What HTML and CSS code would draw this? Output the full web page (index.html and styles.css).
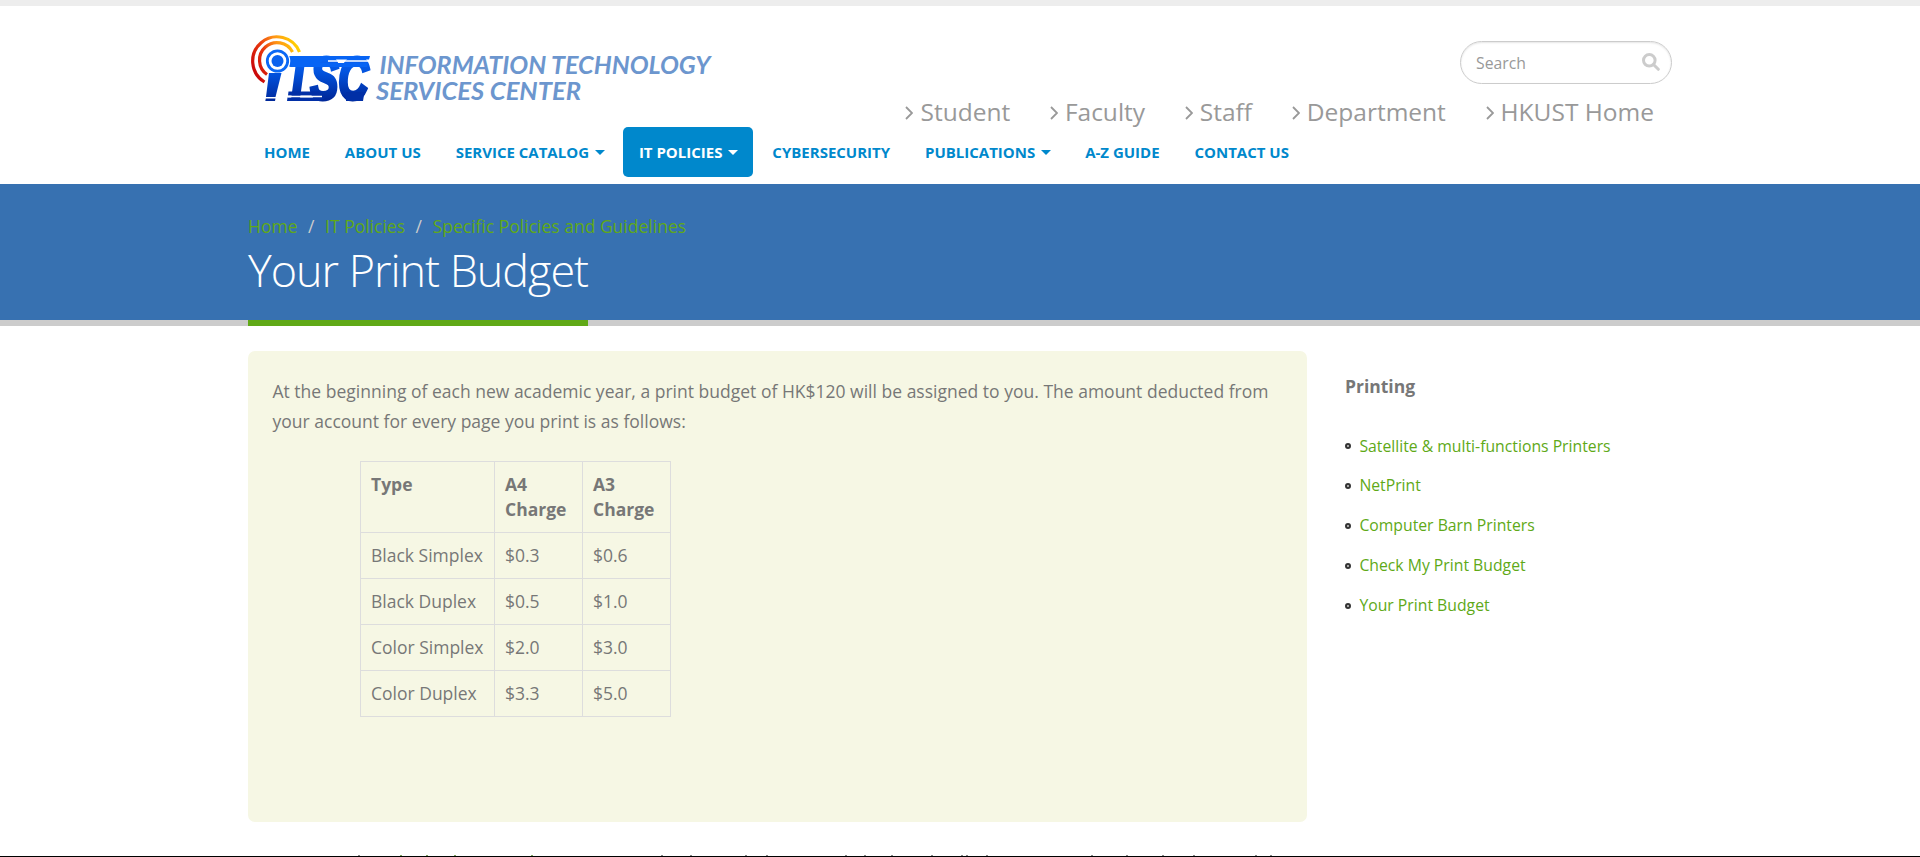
FILE: index.html
```
<!DOCTYPE html>
<html lang="en">
<head>
<meta charset="utf-8">
<title>Your Print Budget</title>
<link rel="stylesheet" href="styles.css">
</head>
<body>
<header class="header">
  <div class="container">
    <div class="masthead">
      <svg class="logo" viewBox="248 28 470 80" width="470" height="80" role="img" aria-label="ITSC">
        <defs>
          <linearGradient id="blue" gradientUnits="userSpaceOnUse" x1="0" y1="52" x2="0" y2="101"><stop offset="0" stop-color="#0a6cff"/><stop offset=".35" stop-color="#0257e6"/><stop offset="1" stop-color="#00289a"/></linearGradient>
          <linearGradient id="fire" gradientUnits="userSpaceOnUse" x1="254" y1="68" x2="298" y2="44"><stop offset="0" stop-color="#cb0a0a"/><stop offset=".35" stop-color="#e8380d"/><stop offset=".65" stop-color="#ff9416"/><stop offset="1" stop-color="#ffd400"/></linearGradient>
          <linearGradient id="glyph" gradientUnits="userSpaceOnUse" x1="0" y1="-43" x2="0" y2="0"><stop offset="0" stop-color="#0a68fa"/><stop offset=".4" stop-color="#0252dc"/><stop offset="1" stop-color="#00289a"/></linearGradient>
        </defs>
        <g fill="none" stroke="url(#fire)" stroke-width="3.200">
          <path d="M264.500 81A24.300 24.300 0 1 1 299.500 51"/>
          <path d="M267 73.500A17.500 17.500 0 1 1 292.500 51"/>
        </g>
        <text class="logo-mark" transform="translate(285 98) scale(.695 1)" fill="url(#glyph)" stroke="url(#glyph)" stroke-width="4">TSC</text>
        <circle cx="277.500" cy="60" r="12.800" fill="#fff"/>
        <path d="M269 72H281.500L275.500 96H266Z" fill="url(#blue)"/>
        <path d="M265.800 97.500H275.500L275 100H265.300Z" fill="#00289a"/>
        <circle cx="277.500" cy="60" r="10.200" fill="#fff" stroke="#0b68f5" stroke-width="2.800"/>
        <circle cx="277.500" cy="60" r="6" fill="#0b62ee"/>
        <path d="M292 55H370L369 58.500H326Q322 59 320 62H368L367 66H340L313 66H290Z" fill="#0764f4"/>
        <path d="M288.500 90.500H320L318 94.500H288ZM287.500 96.500H326L320 100H287ZM346 91H364.500L363 100H346Z" fill="#012fa6"/>
        <path d="M328 60H370M288 95.500H322" stroke="#fff" stroke-width="1.300"/>
        <g class="logo-name">
          <text x="379.500" y="73" textLength="331" lengthAdjust="spacingAndGlyphs">INFORMATION TECHNOLOGY</text>
          <text x="376" y="99" textLength="205" lengthAdjust="spacingAndGlyphs">SERVICES CENTER</text>
        </g>
      </svg>
      <div class="masthead-side">
        <form class="search">
          <input class="search-input" type="text" placeholder="Search" aria-label="Search">
          <svg class="search-icon" viewBox="0 0 18 18" width="18" height="18"><circle cx="7.300" cy="7.300" r="5.800"/><path d="M11.500 11.500L16.300 16.300"/></svg>
        </form>
        <nav class="audience">
          <a href="#"><svg class="chevron" viewBox="0 0 8 14"><path d="M1 1L7 7L1 13"/></svg>Student</a>
          <a href="#"><svg class="chevron" viewBox="0 0 8 14"><path d="M1 1L7 7L1 13"/></svg>Faculty</a>
          <a href="#"><svg class="chevron" viewBox="0 0 8 14"><path d="M1 1L7 7L1 13"/></svg>Staff</a>
          <a href="#"><svg class="chevron" viewBox="0 0 8 14"><path d="M1 1L7 7L1 13"/></svg>Department</a>
          <a href="#"><svg class="chevron" viewBox="0 0 8 14"><path d="M1 1L7 7L1 13"/></svg>HKUST Home</a>
        </nav>
      </div>
    </div>
    <nav class="menu">
      <a href="#">HOME</a>
      <a href="#">ABOUT US</a>
      <a href="#">SERVICE CATALOG<i class="caret"></i></a>
      <a href="#" class="active">IT POLICIES<i class="caret"></i></a>
      <a href="#">CYBERSECURITY</a>
      <a href="#">PUBLICATIONS<i class="caret"></i></a>
      <a href="#">A-Z GUIDE</a>
      <a href="#">CONTACT US</a>
    </nav>
  </div>
</header>
<section class="page-header">
  <div class="container">
    <div class="breadcrumb"><a href="#">Home</a><span>/</span><a href="#">IT Policies</a><span>/</span><a href="#">Specific Policies and Guidelines</a></div>
    <h1 class="title">Your Print Budget</h1>
  </div>
</section>
<div class="container content">
  <main class="main">
    <section class="panel">
      <p class="lead">At the beginning of each new academic year, a print budget of HK$120 will be assigned to you. The amount deducted from<br>your account for every page you print is as follows:</p>
      <table class="charges">
        <tr><th class="col-type">Type</th><th class="col-charge">A4 Charge</th><th class="col-charge">A3 Charge</th></tr>
        <tr><td>Black Simplex</td><td>$0.3</td><td>$0.6</td></tr>
        <tr><td>Black Duplex</td><td>$0.5</td><td>$1.0</td></tr>
        <tr><td>Color Simplex</td><td>$2.0</td><td>$3.0</td></tr>
        <tr><td>Color Duplex</td><td>$3.3</td><td>$5.0</td></tr>
      </table>
    </section>
    <svg class="next-line" viewBox="0 0 1059 1" width="1059" height="1"><path class="tick-dark" d="M110 .5h2M413 .5h2M442 .5h2M497 .5h2M518 .5h2M597 .5h2M616 .5h2M643 .5h2M683 .5h2M713 .5h2M718 .5h2M738 .5h2M843 .5h2M878 .5h2M914 .5h2M945 .5h2M1007 .5h2M1022 .5h2"/><path class="tick-green" d="M152 .5h2M178 .5h2M206 .5h2M283 .5h2"/></svg>
  </main>
  <aside class="sidebar">
    <h2 class="sidebar-title">Printing</h2>
    <ul class="links">
      <li><a href="#">Satellite &amp; multi-functions Printers</a></li>
      <li><a href="#">NetPrint</a></li>
      <li><a href="#">Computer Barn Printers</a></li>
      <li><a href="#">Check My Print Budget</a></li>
      <li><a href="#">Your Print Budget</a></li>
    </ul>
  </aside>
</div>
<div class="bottom-edge"></div>
</body>
</html>
```

FILE: styles.css
```
*, *::before { box-sizing: border-box; }
body {
  margin: 0;
  height: 857px;
  overflow: hidden;
  display: flex;
  flex-direction: column;
  background: #fff;
  color: #777;
  font: 17.5px/30px "Open Sans", "Noto Sans", sans-serif;
}
a { text-decoration: none; color: #60a917; }
.container { width: 1424px; margin: 0 auto; }

.header { height: 184px; flex: none; border-top: 6px solid #ededed; }
.masthead { display: flex; justify-content: space-between; height: 121px; }
.logo { margin-top: 22.5px; }
.logo-mark { font: italic bold 60px "Liberation Sans", sans-serif; }
.logo-name { font: italic bold 24.5px Lato, sans-serif; fill: #6c96ce; }
.masthead-side { display: flex; flex-direction: column; align-items: flex-end; gap: 12px; padding-top: 35px; }
.search {
  display: flex;
  align-items: center;
  width: 212px;
  height: 43px;
  padding: 0 11px 0 15px;
  border: 1.5px solid #ccc;
  border-radius: 22px;
  box-shadow: inset 0 1px 2px rgba(0, 0, 0, .1);
}
.search-input {
  flex: 1;
  min-width: 0;
  padding: 0;
  border: 0;
  outline: 0;
  background: none;
  font: 15.75px "Open Sans", sans-serif;
}
.search-input::placeholder { color: #999; opacity: 1; }
.search-icon { margin-top: -2px; fill: none; stroke: #ccc; stroke-width: 3; stroke-linecap: round; }
.audience { display: flex; gap: 39.7px; padding-right: 18px; font-size: 24.5px; line-height: 31px; }
.audience a { display: flex; align-items: center; color: #999; }
.chevron { width: 8px; height: 14px; margin: 3px 7px 0 0; fill: none; stroke: #999; stroke-width: 1.8; }
.menu { display: flex; gap: 2.9px; }
.menu a {
  display: flex;
  align-items: center;
  height: 50px;
  padding: 0 16px;
  border-radius: 5px;
  color: #0088cc;
  font-size: 15px;
  font-weight: 700;
}
.menu .active { background: #0088cc; color: #fff; }
.caret { margin: 0 -1px 0 6px; border: solid transparent; border-width: 5px 5px 0; border-top-color: currentColor; }

.page-header { height: 142px; flex: none; padding-top: 27px; background: #3771b1; border-bottom: 6px solid #ccc; }
.breadcrumb { display: flex; height: 31px; }
.breadcrumb span { padding: 0 10.6px; color: #ccc; }
.title {
  width: max-content;
  height: 84px;
  margin: 0;
  border-bottom: 6px solid #60a917;
  color: #fff;
  font-size: 44.9px;
  line-height: 55px;
  font-weight: 300;
  letter-spacing: -1px;
}

.content { display: flex; gap: 38px; flex: 1; padding-top: 25px; }
.main { width: 1059px; }
.panel { height: 471px; padding: 25px 24px; border-radius: 7px; background: #f6f7e4; }
.lead { margin: 0; padding-left: .5px; white-space: nowrap; letter-spacing: .008px; }
.charges { width: 311px; margin: 25px 0 0 88px; border-collapse: collapse; table-layout: fixed; line-height: 25px; }
.charges th, .charges td { padding: 10px; border: 1px solid #ddd; text-align: left; vertical-align: top; }
.col-type { width: 134px; }
.col-charge { width: 88px; }
.next-line { display: block; margin-top: 33px; }
.tick-dark { stroke: #888; }
.tick-green { stroke: #7fa560; }

.sidebar { padding-top: 20px; }
.sidebar-title { margin: 0 0 25.5px; font-size: 17.5px; line-height: 30px; font-weight: 700; }
.links { margin: 0; padding: 0; list-style: none; font-size: 15.75px; line-height: 39.8px; }
.links li { display: flex; align-items: center; gap: 8.4px; }
.links li::before { content: ""; width: 6px; height: 6px; border: 2px solid #333; border-radius: 50%; background: #ccc; }
.bottom-edge { flex: none; height: 1px; background: #000; }
```
